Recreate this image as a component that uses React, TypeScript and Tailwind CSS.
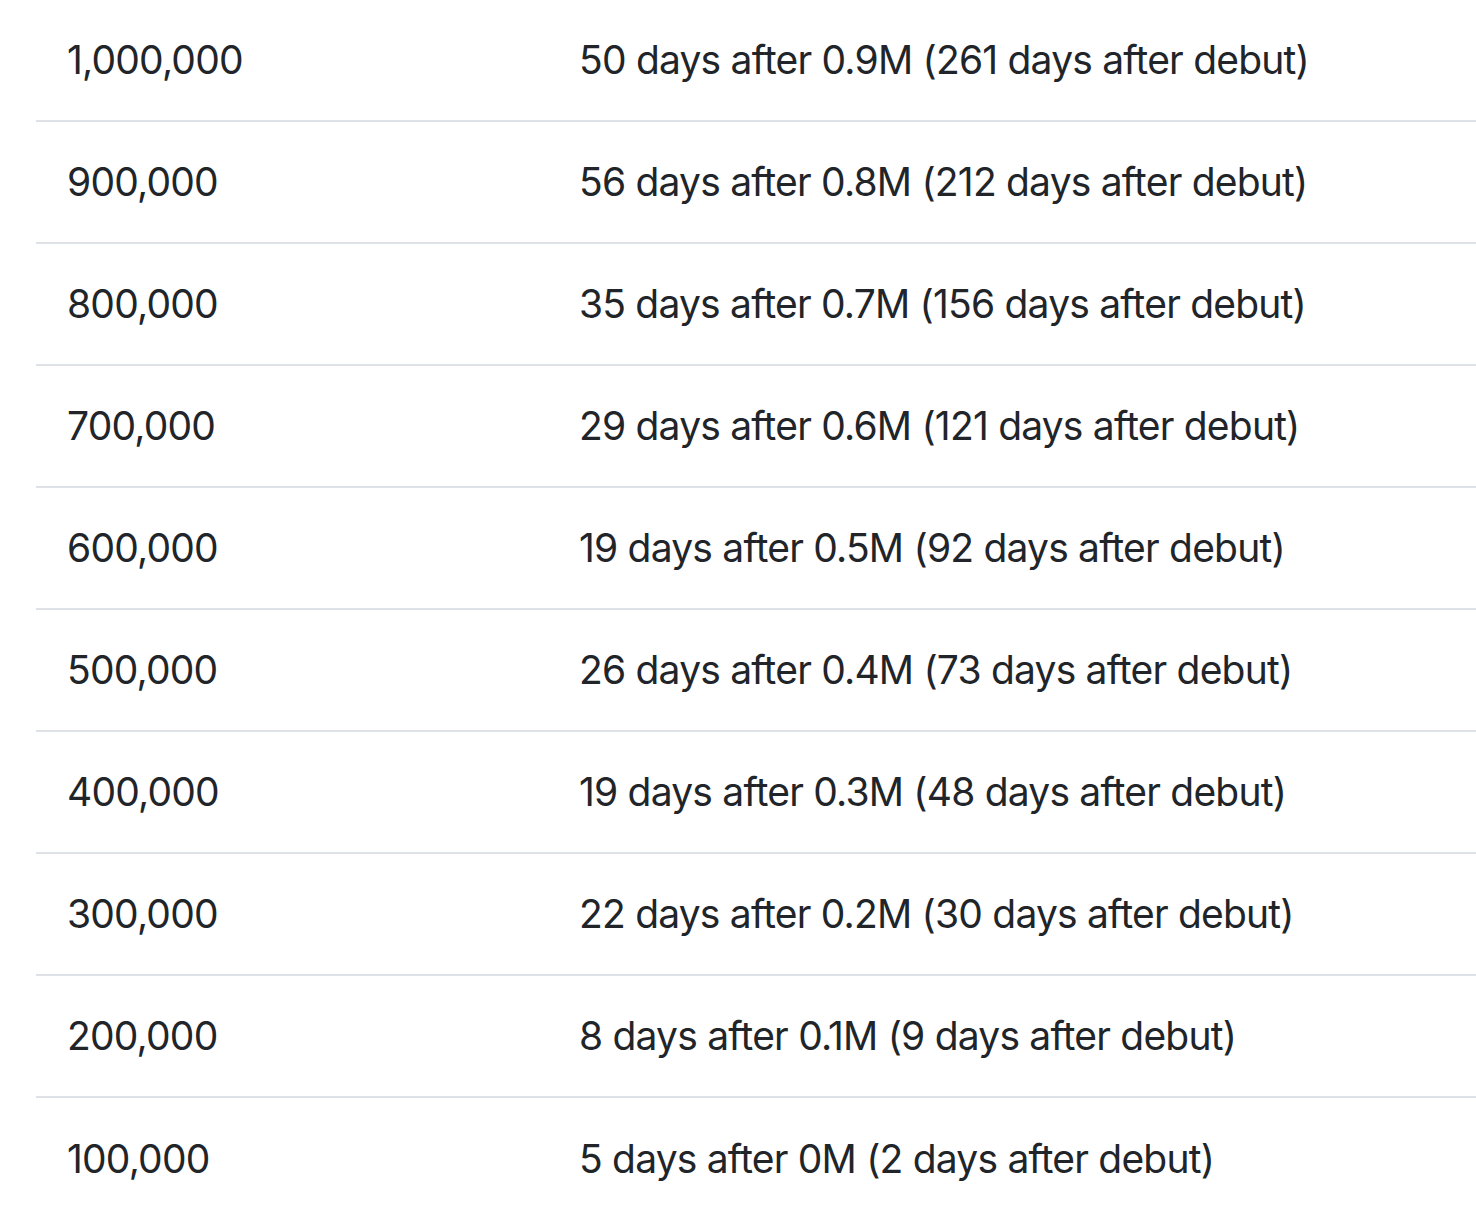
const rows = [
  ["1,000,000", "50 days after 0.9M (261 days after debut)"],
  ["900,000", "56 days after 0.8M (212 days after debut)"],
  ["800,000", "35 days after 0.7M (156 days after debut)"],
  ["700,000", "29 days after 0.6M (121 days after debut)"],
  ["600,000", "19 days after 0.5M (92 days after debut)"],
  ["500,000", "26 days after 0.4M (73 days after debut)"],
  ["400,000", "19 days after 0.3M (48 days after debut)"],
  ["300,000", "22 days after 0.2M (30 days after debut)"],
  ["200,000", "8 days after 0.1M (9 days after debut)"],
  ["100,000", "5 days after 0M (2 days after debut)"],
];

export default function App() {
  return (
    <div className="min-h-screen bg-white pl-[36px] overflow-hidden font-['Inter',sans-serif] text-[#212529]">
      <div className="w-[1500px]">
        {rows.map(([count, detail], idx) => (
          <div
            key={idx}
            className={`flex items-center h-[122px] ${idx < rows.length - 1 ? "border-b-2 border-[#dee2e6]" : ""}`}
          >
            {/* Milestone */}
            <div className="w-[512px] pl-[31px] text-[39px] tracking-[-0.8px]">{count}</div>
            {/* Time to reach */}
            <div className="pl-[31px] text-[39px] tracking-[-0.8px]">{detail}</div>
          </div>
        ))}
      </div>
    </div>
  );
}
